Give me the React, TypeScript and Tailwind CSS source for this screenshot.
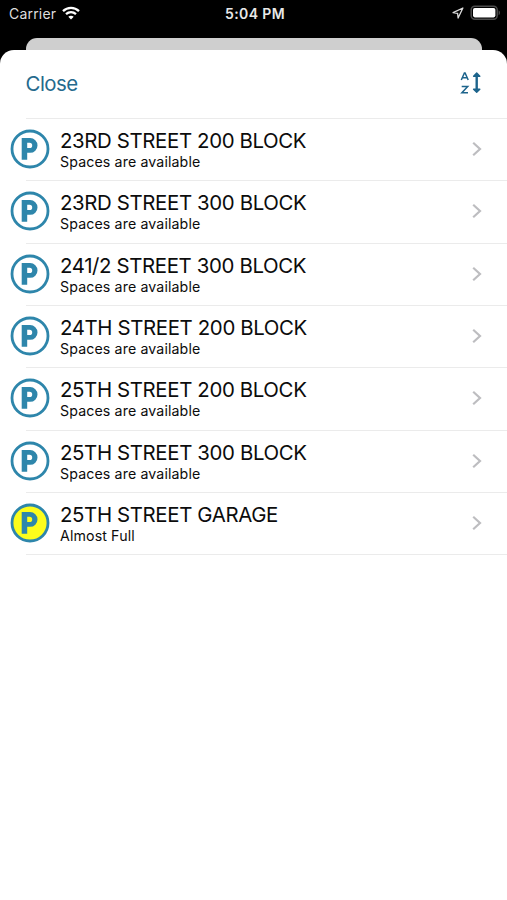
import React from 'react';

type Lot = {
  name: string;
  status: string;
  almostFull?: boolean;
};

const lots: Lot[] = [
  { name: '23RD STREET 200 BLOCK', status: 'Spaces are available' },
  { name: '23RD STREET 300 BLOCK', status: 'Spaces are available' },
  { name: '241/2 STREET 300 BLOCK', status: 'Spaces are available' },
  { name: '24TH STREET 200 BLOCK', status: 'Spaces are available' },
  { name: '25TH STREET 200 BLOCK', status: 'Spaces are available' },
  { name: '25TH STREET 300 BLOCK', status: 'Spaces are available' },
  { name: '25TH STREET GARAGE', status: 'Almost Full', almostFull: true },
];

const WifiIcon: React.FC = () => (
  <svg width="18" height="14" viewBox="0 0 18 14" fill="none" stroke="#fff" strokeWidth="2.3">
    <path d="M1 5.1C5.5 .8 12.5 .8 17 5.1" />
    <path d="M4 8.2c2.9-2.6 7.1-2.6 10 0" />
    <path d="M9 13.4 6.3 10.7c1.5-1.4 3.9-1.4 5.4 0Z" fill="#fff" stroke="none" />
  </svg>
);

const LocationIcon: React.FC = () => (
  <svg width="12" height="12" viewBox="0 0 12 12" fill="none" stroke="#dcdcdc" strokeWidth="1.3" strokeLinejoin="round">
    <path d="M10.9 1 1.1 5.7l4.5.7.5 4.6Z" />
  </svg>
);

const BatteryIcon: React.FC = () => (
  <svg width="31" height="16" viewBox="0 0 31 16" fill="none">
    <rect x="1.2" y="1.2" width="26" height="13" rx="3.6" stroke="#4c4c4c" strokeWidth="1.5" />
    <rect x="3" y="3" width="22.4" height="9.4" rx="1.8" fill="#fff" />
    <path d="M28.6 5.2c1.9.9 1.9 4.1 0 5Z" fill="#4c4c4c" />
  </svg>
);

const SortIcon: React.FC = () => (
  <svg width="22" height="24" viewBox="0 0 22 24" fill="none" stroke="#1d648c" strokeWidth="1.5">
    <path d="M1.3 9 4.4 1.9h.7L8.2 9M2.4 6.7h4.8" />
    <path d="M1.7 15.5h6l-5.8 6.2h6.1" />
    <path d="M16.7 4v15" strokeWidth="2.4" />
    <path
      d="m16.7 2.1 3.1 3.1h-6.2ZM16.7 21.3l-3.1-3.1h6.2Z"
      fill="#1d648c"
      strokeWidth="1.4"
      strokeLinejoin="round"
    />
  </svg>
);

const ParkingIcon: React.FC<{ almostFull?: boolean }> = ({ almostFull }) => (
  <svg className="shrink-0" width="40" height="40" viewBox="0 0 40 40">
    <circle cx="20" cy="20" r="18" fill={almostFull ? '#fdfd1c' : '#fff'} stroke="#2e86ab" strokeWidth="2.8" />
    <path
      fill="#2e86ab"
      fillRule="evenodd"
      d="M11.7 9h8.4a7.4 7.4 0 0 1 0 14.8H17.2v7h-5.5ZM17.2 13.8v5.2h2.4a2.6 2.6 0 0 0 0-5.2Z"
    />
  </svg>
);

const Chevron: React.FC = () => (
  <svg width="10" height="16" viewBox="0 0 10 16" fill="none" stroke="#bdbdc0" strokeWidth="2.2">
    <path d="m1.2 1.8 6.8 6.2-6.8 6.2" />
  </svg>
);

const LotRow: React.FC<{ lot: Lot }> = ({ lot }) => (
  <li className="flex h-[62.33px] items-stretch pl-[10px]">
    <div className="flex items-center pb-[2.4px]">
      <ParkingIcon almostFull={lot.almostFull} />
    </div>
    <div className="flex flex-1 items-center justify-between pb-[2px] pl-[10px] pr-[25px]">
      <div className="whitespace-nowrap pt-[2px] text-[#0c0c0c]">
        <p className="text-[20.4px] leading-[24px] tracking-[-0.36px]">{lot.name}</p>
        <p className="text-[14.2px] leading-[18px] tracking-[0.12px]">{lot.status}</p>
      </div>
      <Chevron />
    </div>
  </li>
);

const App: React.FC = () => {
  return (
    <div className="flex h-[900px] w-[507px] flex-col overflow-hidden bg-black font-['Inter',sans-serif]">
      <div className="grid h-[38px] shrink-0 grid-cols-3 items-start pl-[9px] pr-[6px] pt-[4px]">
        <div className="flex h-[18px] items-center gap-[6px] text-[14px] tracking-[0.2px] text-[#dedede]">
          Carrier
          <WifiIcon />
        </div>
        <div className="flex h-[18px] items-center justify-center text-[14px] font-semibold tracking-[0.4px] text-[#e8e8e8]">
          5:04 PM
        </div>
        <div className="flex h-[18px] items-center justify-end gap-[6px]">
          <LocationIcon />
          <BatteryIcon />
        </div>
      </div>
      <div className="ml-[26px] mr-[25px] h-[12px] shrink-0 rounded-t-[11px] bg-[#cfcfcf]" />
      <main className="flex-1 rounded-t-[14px] bg-white">
        <header className="flex h-[68px] items-center justify-between pl-[25.5px] pr-[25px]">
          <button className="text-[20.4px] leading-[24px] tracking-[-0.5px] text-[#246a8d]">Close</button>
          <div className="pb-[2px]">
            <SortIcon />
          </div>
        </header>
        <div className="ml-[26px] h-px bg-[#ebebeb]" />
        <ul>
          {lots.map((lot) => (
            <React.Fragment key={lot.name}>
              <LotRow lot={lot} />
              <li className="-mt-px ml-[26px] h-px bg-[#ebebeb]" />
            </React.Fragment>
          ))}
        </ul>
      </main>
    </div>
  );
};

export default App;
